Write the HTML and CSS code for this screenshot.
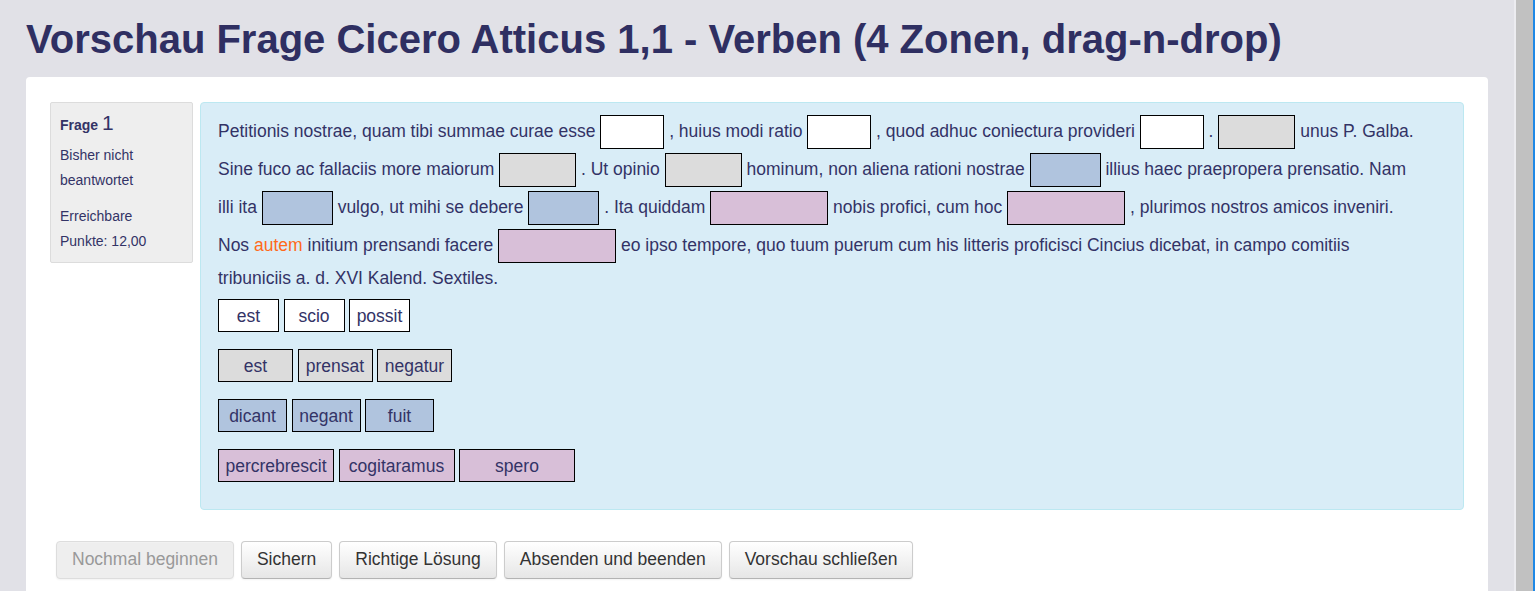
FILE: index.html
```html
<!DOCTYPE html>
<html lang="de">
<head>
<meta charset="utf-8">
<title>Vorschau Frage</title>
<link rel="stylesheet" href="styles.css">
</head>
<body>
<div class="frame">
  <main class="page">
    <h1 class="title">Vorschau Frage Cicero Atticus 1,1 - Verben (4 Zonen, drag-n-drop)</h1>
    <section class="card">
      <div class="que">
        <aside class="info">
          <h3 class="qno">Frage <span class="num">1</span></h3>
          <div class="state">Bisher nicht beantwortet</div>
          <div class="grade">Erreichbare Punkte: 12,00</div>
        </aside>
        <div class="formulation">
          <p class="qtext">Petitionis nostrae, quam tibi summae curae esse <span class="drop g1"></span> , huius modi ratio <span class="drop g1"></span> , quod adhuc coniectura provideri <span class="drop g1"></span> . <span class="drop g2"></span> unus P. Galba. Sine fuco ac fallaciis more maiorum <span class="drop g2"></span> . Ut opinio <span class="drop g2"></span> hominum, non aliena rationi nostrae <span class="drop g3"></span> illius haec praepropera prensatio. Nam illi ita <span class="drop g3"></span> vulgo, ut mihi se debere <span class="drop g3"></span> . Ita quiddam <span class="drop g4"></span> nobis profici, cum hoc <span class="drop g4"></span> , plurimos nostros amicos inveniri. Nos <span class="hl">autem</span> initium prensandi facere <span class="drop g4"></span> eo ipso tempore, quo tuum puerum cum his litteris proficisci Cincius dicebat, in campo comitiis tribuniciis a. d. XVI Kalend. Sextiles.</p>
          <div class="drags">
            <div class="group">
              <span class="drag g1">est</span><span class="drag g1">scio</span><span class="drag g1">possit</span>
            </div>
            <div class="group">
              <span class="drag g2">est</span><span class="drag g2">prensat</span><span class="drag g2">negatur</span>
            </div>
            <div class="group">
              <span class="drag g3">dicant</span><span class="drag g3">negant</span><span class="drag g3">fuit</span>
            </div>
            <div class="group">
              <span class="drag g4">percrebrescit</span><span class="drag g4">cogitaramus</span><span class="drag g4">spero</span>
            </div>
          </div>
        </div>
      </div>
      <div class="buttons">
        <button class="btn" disabled>Nochmal beginnen</button>
        <button class="btn">Sichern</button>
        <button class="btn">Richtige Lösung</button>
        <button class="btn">Absenden und beenden</button>
        <button class="btn">Vorschau schließen</button>
      </div>
    </section>
  </main>
  <div class="edge"></div>
  <div class="rail"></div>
  <div class="blue"></div>
</div>
</body>
</html>
```

FILE: styles.css
```css
html, body {
  margin: 0;
  padding: 0;
  height: 591px;
  overflow: hidden;
}
body {
  font-family: "Liberation Sans", Arial, sans-serif;
  color: #333366;
}
.frame {
  display: flex;
  height: 591px;
}
.page {
  flex: 1;
  background: #e1e1e7;
  padding: 0 26px;
  min-width: 0;
}
.edge { width: 2px; background: #ececf0; }
.rail { width: 17px; background: #c1c1c1; }
.blue { width: 2px; background: #1e88e5; }

.title {
  margin: 16px 0 15px 0;
  font-size: 40px;
  line-height: 46px;
  font-weight: bold;
  color: #2f2f62;
  white-space: nowrap;
}
.card {
  background: #fff;
  border-radius: 4px 4px 0 0;
  padding: 25px 24px 40px 24px;
  height: 600px;
}
.que {
  display: flex;
  align-items: flex-start;
  gap: 7px;
}
.info {
  width: 112px;
  flex: none;
  background: #eeeeee;
  border: 1px solid #dcdcdc;
  border-radius: 2px;
  padding: 7px 20px 8px 9px;
  font-size: 14px;
  line-height: 25px;
}
.qno {
  margin: 0 0 5px 0;
  font-size: 14px;
  font-weight: bold;
  line-height: 25px;
}
.num {
  font-size: 21px;
  font-weight: normal;
}
.state {
  margin-bottom: 11px;
}
.formulation {
  flex: 1;
  background: #d9edf7;
  border: 1px solid #bce8f1;
  border-radius: 4px;
  padding: 10px 45px 10px 17px;
  font-size: 17.5px;
}
.qtext {
  margin: 0;
  line-height: 26px;
}
.hl { color: #ff6a1a; }
.drop {
  display: inline-block;
  box-sizing: border-box;
  height: 34px;
  margin: 2px 0;
  border: 1px solid #000;
  vertical-align: middle;
}
.drop.g1 { width: 64px; background: #ffffff; }
.drop.g2 { width: 77px; background: #dcdcdc; }
.drop.g3 { width: 71px; background: #b0c4de; }
.drop.g4 { width: 118px; background: #d8bfd8; }

.drags {
  padding-top: 8px;
}
.group {
  display: flex;
  gap: 4.5px;
  margin-bottom: 17px;
}
.drag {
  box-sizing: border-box;
  height: 33px;
  border: 1px solid #000;
  display: flex;
  align-items: center;
  justify-content: center;
  line-height: 20px;
  white-space: nowrap;
}
.drag.g1 { width: 61px; background: #ffffff; }
.drag.g2 { width: 75px; background: #dcdcdc; }
.drag.g3 { width: 69px; background: #b0c4de; }
.drag.g4 { width: 116px; background: #d8bfd8; }

.buttons {
  display: flex;
  gap: 7px;
  margin: 31px 0 0 6px;
}
.btn {
  font-family: "Liberation Sans", Arial, sans-serif;
  font-size: 17.5px;
  line-height: 19px;
  padding: 8px 15px 9px 15px;
  color: #333333;
  background: linear-gradient(#ffffff, #e6e6e6);
  border: 1px solid #cccccc;
  border-bottom-color: #b3b3b3;
  border-radius: 4px;
  box-shadow: inset 0 1px 0 rgba(255,255,255,0.2), 0 1px 2px rgba(0,0,0,0.05);
}
.btn:disabled {
  background: #eeeeee;
  color: #999999;
  border-color: #dddddd;
}
```
